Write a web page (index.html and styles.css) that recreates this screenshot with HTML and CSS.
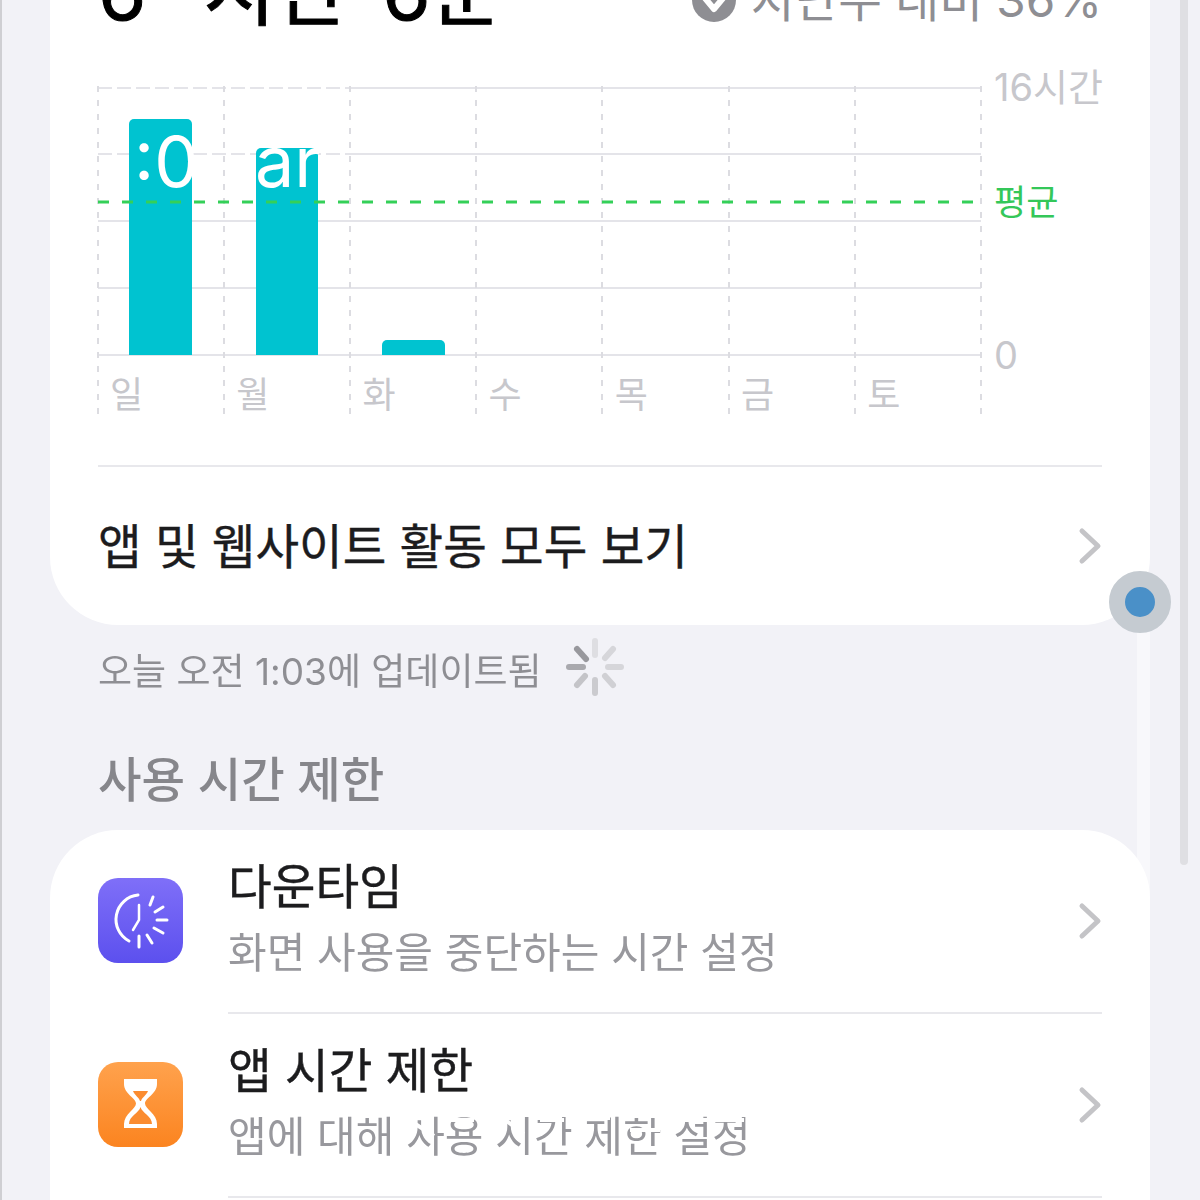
FILE: index.html
```html
<!DOCTYPE html>
<html lang="ko">
<head>
  <meta charset="UTF-8">
  <meta name="viewport" content="width=device-width,initial-scale=1">
  <title>스크린 타임</title>
  <link rel="stylesheet" href="styles.css">
</head>
<body>
  <div class="page">
    <div class="scroll-track"></div>

    <section class="card summary">
      <div class="summary-head">
        <h1>6· 시간 6분</h1>
        <div class="compare">
          <svg width="46" height="46" viewBox="0 0 46 46"><circle cx="23" cy="23" r="22" fill="#8e8e93"/><path d="M13 20l10 12 10-12" fill="none" stroke="#fff" stroke-width="6" stroke-linecap="round" stroke-linejoin="round"/></svg>
          <span>지난주 대비 36%</span>
        </div>
      </div>

      <div class="chart">
        <svg class="plot" width="886" height="330" viewBox="0 0 886 330">
          <g stroke="#e4e4e9" stroke-width="2">
            <path d="M252 2H883M252 68H883M0 135H883M0 202H883M0 269H883"/>
            <path d="M0 2H252M0 68H252" stroke-dasharray="14 5"/>
          </g>
          <g stroke="#dcdce1" stroke-width="2" stroke-dasharray="6 8">
            <path d="M0 0V330M126 0V330M252 0V330M378 0V330M504 0V330M631 0V330M757 0V330M883 0V330"/>
          </g>
          <g fill="#00c3d0">
            <path d="M31 269V38a5 5 0 0 1 5-5H89a5 5 0 0 1 5 5V269Z"/>
            <path d="M158 269V67a5 5 0 0 1 5-5H215a5 5 0 0 1 5 5V269Z"/>
            <path d="M284 269V259a5 5 0 0 1 5-5H342a5 5 0 0 1 5 5V269Z"/>
          </g>
          <path d="M0 116H884" stroke="#34d058" stroke-width="3" stroke-dasharray="11 13"/>
        </svg>
        <span class="bar-label label-time">:0</span>
        <span class="bar-label label-am">ar</span>
        <span class="axis axis-top">16시간</span>
        <span class="axis axis-avg">평균</span>
        <span class="axis axis-zero">0</span>
        <div class="days">
          <span>일</span><span>월</span><span>화</span><span>수</span><span>목</span><span>금</span><span>토</span>
        </div>
      </div>

      <div class="link-row">
        <span>앱 및 웹사이트 활동 모두 보기</span>
        <svg class="chevron" width="24" height="38" viewBox="0 0 24 38"><path d="M4 4l16 15L4 34"/></svg>
      </div>
    </section>

    <div class="updated">
      <span>오늘 오전 1:03에 업데이트됨</span>
      <svg width="60" height="60" viewBox="0 0 60 60" stroke-width="6" stroke-linecap="round" fill="none">
        <path d="M30 4V18" stroke="#dedee2"/>
        <path d="M48 12L40 21" stroke="#d6d6da"/>
        <path d="M56 30H43" stroke="#d6d6da"/>
        <path d="M48 48L40 39" stroke="#d0d0d4"/>
        <path d="M30 56V43" stroke="#cbcbcf"/>
        <path d="M12 48L20 39" stroke="#c4c4c8"/>
        <path d="M4 30H18" stroke="#a9a9ae"/>
        <path d="M12 12L21 22" stroke="#98989d"/>
      </svg>
    </div>

    <h2 class="section-title">사용 시간 제한</h2>

    <section class="card list">
      <div class="row">
        <svg class="app-icon" width="85" height="85" viewBox="0 0 85 85">
          <defs>
            <linearGradient id="downtime" x1="0" y1="0" x2="0" y2="1"><stop offset="0" stop-color="#7f6ff8"/><stop offset="1" stop-color="#5c50ee"/></linearGradient>
          </defs>
          <rect width="85" height="85" rx="20" fill="url(#downtime)"/>
          <g fill="none" stroke="#fff" stroke-linecap="round">
            <path d="M40 17A24.500 24.500 0 0 0 31 63" stroke-width="3"/>
            <path d="M41 27V42L35 52" stroke-width="2.500"/>
            <path d="M52 27L55 19M57 34L65 29M59 42H69M56 50L65 55M49 57L54 65M41 58V69" stroke-width="3"/>
          </g>
        </svg>
        <div class="row-body">
          <div class="row-text">
            <div class="row-title">다운타임</div>
            <div class="row-sub">화면 사용을 중단하는 시간 설정</div>
          </div>
          <svg class="chevron" width="24" height="38" viewBox="0 0 24 38"><path d="M4 4l16 15L4 34"/></svg>
        </div>
      </div>
      <div class="row">
        <svg class="app-icon" width="85" height="85" viewBox="0 0 85 85">
          <defs>
            <linearGradient id="applimit" x1="0" y1="0" x2="0" y2="1"><stop offset="0" stop-color="#ffa24d"/><stop offset="1" stop-color="#fb8420"/></linearGradient>
          </defs>
          <rect width="85" height="85" rx="20" fill="url(#applimit)"/>
          <path d="M26 17H59V22C59 32 47 36 47 41.500C47 47 59 52 59 62V66H26V62C26 52 38 47 38 41.500C38 36 26 32 26 22Z" fill="#fff"/>
          <path d="M35 29H50C48 34 44 35 43 39H42C41 35 37 34 35 29Z" fill="#fb8c30"/>
          <path d="M42.500 45C44 51 54 54 54 62H31C31 54 41 51 42.500 45Z" fill="#fb8c30"/>
        </svg>
        <div class="row-body">
          <div class="row-text">
            <div class="row-title">앱 시간 제한</div>
            <div class="row-sub row-sub-worn">앱에 대해 사용 시간 제한 설정
              <!-- white scratches lying over the words -->
              <svg class="scratches" width="540" height="62" viewBox="0 0 540 62"><path d="M178 12L206 30M212 10V22M218 14H246M272 10L296 28M304 8V20M312 14H336M358 12H382M396 10H436M402 24H432M446 14H480M484 14H516" fill="none" stroke="#fff" stroke-width="4"/></svg>
            </div>
          </div>
          <svg class="chevron" width="24" height="38" viewBox="0 0 24 38"><path d="M4 4l16 15L4 34"/></svg>
        </div>
      </div>
    </section>

    <!-- things lying on top of the screen -->
    <div class="edge"></div>
    <div class="scroll-thumb"></div>
    <div class="touch-dot"></div>
  </div>
</body>
</html>
```

FILE: styles.css
```css
* { box-sizing: border-box; margin: 0; padding: 0; }
body {
  font-family: Inter, "Noto Sans CJK KR", sans-serif;
  background: #f2f2f7;
  color: #1c1c1e;
}
.page {
  position: relative;
  height: 1200px;
  padding: 0 50px;
  overflow: hidden;
  filter: blur(.6px);
}
.card {
  position: relative;
  background: #fff;
  border-radius: 68px;
}
.summary {
  margin-top: -100px;
  padding: 60px 48px 0;
}
.summary-head {
  display: flex;
  justify-content: space-between;
  align-items: center;
  height: 80px;
}
.summary-head h1 {
  margin-top: -16px;
  font-size: 78px;
  font-weight: 400;
  line-height: 80px;
  word-spacing: 13px;
  color: #000;
  -webkit-text-stroke: 1px #000;
  white-space: nowrap;
}
.compare {
  display: flex;
  align-items: center;
  gap: 14px;
  margin-top: -8px;
  font-size: 47.600px;
  color: #8e8e93;
}
.compare svg { margin-top: 8px; }
.chart {
  position: relative;
  height: 330px;
  margin-top: 46px;
}
.plot { display: block; overflow: visible; }
.bar-label {
  position: absolute;
  top: 36px;
  font-size: 70px;
  line-height: 80px;
  color: #fff;
}
.label-time { left: 36px; }
.label-am { left: 157px; }
.axis {
  position: absolute;
  left: 896px;
  font-size: 38px;
  line-height: 44px;
  color: #c7c7cc;
  white-space: nowrap;
}
.axis-top { top: -21px; }
.axis-avg { top: 94px; font-size: 35px; color: #34c759; }
.axis-zero { top: 247px; }
.days {
  position: absolute;
  left: 0;
  top: 287px;
  display: grid;
  grid-template-columns: repeat(7, 126.200px);
  font-size: 36px;
  line-height: 44px;
  color: #c7c7cc;
}
.days span { padding-left: 12px; }
.link-row {
  display: flex;
  justify-content: space-between;
  align-items: center;
  height: 160px;
  margin-top: 49px;
  border-top: 2px solid #e8e8ec;
  font-size: 47.400px;
  color: #1c1c1e;
  -webkit-text-stroke: .4px #1c1c1e;
}
.link-row span { margin-top: -5px; }
.chevron { flex: none; }
.chevron path {
  fill: none;
  stroke: #c4c4c7;
  stroke-width: 5;
  stroke-linecap: round;
  stroke-linejoin: round;
}
.updated {
  display: flex;
  align-items: center;
  gap: 23px;
  margin-top: 12px;
  padding-left: 48px;
  font-size: 37px;
  color: #8e8e93;
}
.updated span { margin-top: 3px; }
.section-title {
  margin-top: 53px;
  padding-left: 48px;
  font-size: 47.300px;
  font-weight: 500;
  line-height: 60px;
  color: #86868b;
}
.list {
  margin-top: 20px;
  height: 500px;
}
.row {
  display: flex;
  align-items: center;
  gap: 45px;
  height: 184px;
  padding-left: 48px;
}
.app-icon { flex: none; margin-bottom: 3px; }
.row-body {
  flex: 1;
  display: flex;
  justify-content: space-between;
  align-items: center;
  align-self: stretch;
  margin-right: 48px;
  border-bottom: 2px solid #e8e8ec;
}
.row-text { margin-top: -2px; }
.row-title {
  font-size: 47.500px;
  line-height: 62px;
  color: #1c1c1e;
  -webkit-text-stroke: .4px #1c1c1e;
}
.row-sub {
  margin-top: 4px;
  font-size: 42px;
  line-height: 62px;
  color: #98989d;
}
.row-sub-worn { position: relative; }
.scratches {
  position: absolute;
  left: 0;
  top: 0;
}
.edge {
  position: absolute;
  left: 0;
  top: 0;
  width: 2px;
  height: 1200px;
  background: #cfcfd3;
}
.scroll-track {
  position: absolute;
  left: 1137px;
  top: 632px;
  width: 13px;
  height: 568px;
  background: #f8f8fb;
}
.scroll-thumb {
  position: absolute;
  left: 1180px;
  top: -10px;
  width: 8px;
  height: 875px;
  border-radius: 4px;
  background: #dfdfe3;
}
.touch-dot {
  position: absolute;
  left: 1109px;
  top: 571px;
  width: 62px;
  height: 62px;
  border-radius: 50%;
  border: 16px solid #c5cbd1;
  background: #4a90c8;
}
```
